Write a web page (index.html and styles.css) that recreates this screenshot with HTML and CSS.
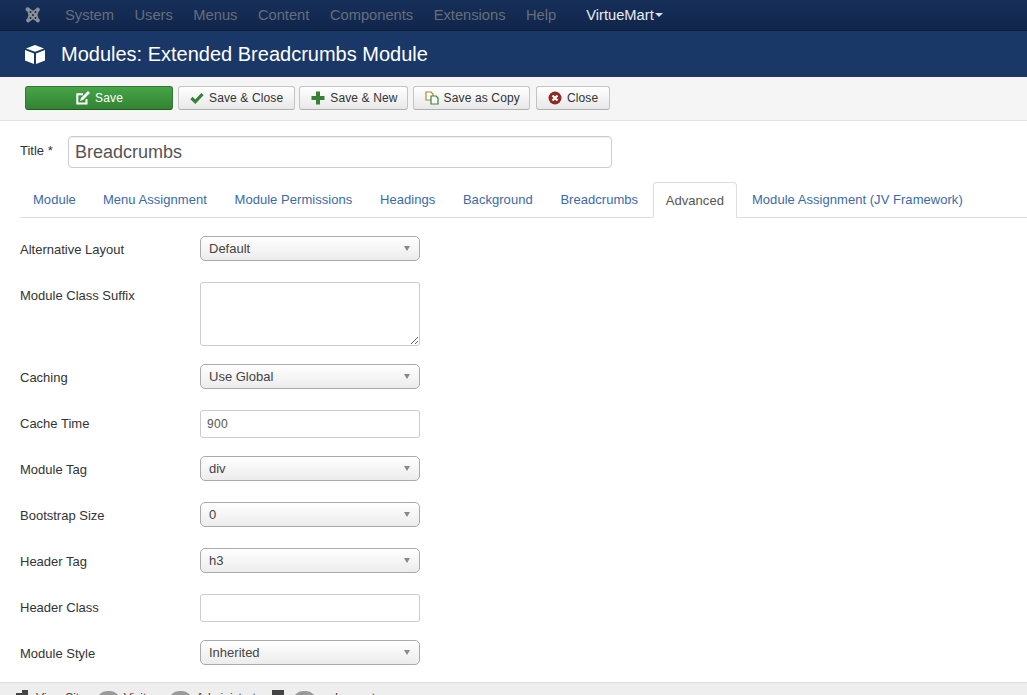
FILE: index.html
```html
<!DOCTYPE html>
<html lang="en">
<head>
<meta charset="utf-8">
<title>Modules: Extended Breadcrumbs Module</title>
<link rel="stylesheet" href="styles.css">
</head>
<body>
<nav class="navbar">
  <svg class="logo" viewBox="0 0 16 18" width="16" height="18"><path fill="#8a8f98" d="M3 1.200a2 2 0 0 1 2 1.600l3 2 3-2a2 2 0 1 1 2.600 2.600L12.500 9l1.100 3.600a2 2 0 1 1-2.600 2.600l-3-2-3 2a2 2 0 1 1-2.600-2.600L3.500 9 2.400 5.400A2 2 0 0 1 3 1.200z"/><g fill="#13294a"><circle cx="5.500" cy="6" r="1"/><circle cx="10.500" cy="6" r="1"/><circle cx="8" cy="9" r="1"/><circle cx="5.500" cy="12" r="1"/><circle cx="10.500" cy="12" r="1"/></g></svg>
  <ul class="menu">
    <li>System</li><li>Users</li><li>Menus</li><li>Content</li><li>Components</li><li>Extensions</li><li>Help</li>
  </ul>
  <div class="vm">VirtueMart<span class="caret"></span></div>
</nav>
<header class="title-bar">
  <svg class="cube" viewBox="0 0 20 19" width="20" height="19"><path fill="#fff" d="M10 0l9 3.400L10 6.800 1 3.400zM0 5l9 3.500V19l-9-3.500zM20 5v10.500L11 19V8.500z"/></svg>
  <h1>Modules: Extended Breadcrumbs Module</h1>
</header>
<div class="toolbar">
  <button class="btn btn-save"><svg viewBox="0 0 14 14" width="14" height="14"><path fill="none" stroke="#fff" stroke-width="2" d="M10.500 8v4.500h-9.200v-9.200H7"/><path fill="#fff" d="M12 0l2 2-7 7-3 1 1-3z"/></svg>Save</button>
  <button class="btn"><svg viewBox="0 0 14 14" width="14" height="14"><path fill="none" stroke="#378137" stroke-width="3.200" d="M1.500 7l3.800 3.800L12.500 3"/></svg>Save &amp; Close</button>
  <button class="btn btn-tight"><svg viewBox="0 0 14 14" width="14" height="14"><path fill="#378137" d="M5 .5h4V5h4.500v4H9v4.500H5V9H.5V5H5z"/></svg>Save &amp; New</button>
  <button class="btn btn-tight"><svg viewBox="0 0 14 14" width="14" height="14"><path fill="#fff" stroke="#a98a2e" stroke-width="1.200" d="M1 1h5l2 2v6H1z"/><path fill="#fff" stroke="#378137" stroke-width="1.200" d="M6 5h5l2 2v6H6z"/></svg>Save as Copy</button>
  <button class="btn btn-close"><svg viewBox="0 0 14 14" width="14" height="14"><circle cx="7" cy="7" r="6.500" fill="#8f2a22"/><path stroke="#fff" stroke-width="2.200" d="M4.500 4.500l5 5m0-5l-5 5"/></svg>Close</button>
</div>
<main class="content">
  <div class="title-row">
    <label class="title-label">Title *</label>
    <input class="title-input" type="text" value="Breadcrumbs">
  </div>
  <ul class="tabs">
    <li>Module</li><li>Menu Assignment</li><li>Module Permissions</li><li>Headings</li><li>Background</li><li>Breadcrumbs</li><li class="active">Advanced</li><li>Module Assignment (JV Framework)</li>
  </ul>
  <form class="form">
    <div class="row"><label>Alternative Layout</label><div class="sel">Default</div></div>
    <div class="row"><label>Module Class Suffix</label><textarea class="area"></textarea></div>
    <div class="row"><label>Caching</label><div class="sel">Use Global</div></div>
    <div class="row"><label>Cache Time</label><input class="txt" type="text" value="900"></div>
    <div class="row"><label>Module Tag</label><div class="sel">div</div></div>
    <div class="row"><label>Bootstrap Size</label><div class="sel">0</div></div>
    <div class="row"><label>Header Tag</label><div class="sel">h3</div></div>
    <div class="row"><label>Header Class</label><input class="txt" type="text"></div>
    <div class="row"><label>Module Style</label><div class="sel">Inherited</div></div>
  </form>
</main>
<footer class="status">
  <svg class="st-icon" viewBox="0 0 12 12" width="12" height="12"><path fill="#444" d="M0 3h8v9H0zM6 0h6v6H6z"/></svg><span class="st-text st-first">View Site</span>
  <span class="badge">0</span><span class="st-text">Visitors</span>
  <span class="badge">1</span><span class="st-text">Administrator</span>
  <svg class="st-icon st-mail" viewBox="0 0 12 12" width="12" height="12"><rect width="12" height="10" fill="#444"/></svg>
  <span class="badge">0</span><span class="st-text">— Log out</span>
</footer>
</body>
</html>
```
FILE: styles.css
```css
* { box-sizing: border-box; }
html, body { margin: 0; height: 695px; overflow: hidden; }
body { font-family: "Liberation Sans", Arial, sans-serif; font-size: 13px; color: #333; background: #fff; }

.navbar { display: flex; align-items: center; height: 31px; padding: 0 0 1px 25px; background: linear-gradient(#17305a, #10254a); border-bottom: 1px solid #0c1c38; }
.logo { display: block; margin: 0 24px 0 0; }
.menu { display: flex; gap: 20.5px; margin: 0; padding: 0; list-style: none; font-size: 14.7px; color: #666e7b; }
.vm { display: flex; align-items: center; margin-left: 30px; font-size: 14.7px; color: #e8ecf2; }
.caret { width: 0; height: 0; margin-left: 1px; border: 4px solid transparent; border-top-color: #d8dde5; border-bottom: 0; }

.title-bar { display: flex; align-items: center; height: 46px; padding-left: 25px; background: #1a3867; }
.cube { display: block; margin-right: 16px; }
.title-bar h1 { margin: 0; font-size: 20px; font-weight: 400; color: #fff; }

.toolbar { display: flex; align-items: flex-start; height: 44px; padding: 9px 0 0 25px; background: #f5f5f5; border-bottom: 1px solid #e3e3e3; }
.btn { display: flex; align-items: center; justify-content: center; gap: 5px; height: 24px; margin: 0 4px 0 0; padding: 0 11px; font: 12px/1 "Liberation Sans", Arial, sans-serif; letter-spacing: .13px; color: #333; background: linear-gradient(#fff, #e8e8e8); border: 1px solid #c4c4c4; border-bottom-color: #b0b0b0; border-radius: 3px; }
.btn svg { display: block; flex: none; }
.btn-save { width: 148px; margin-right: 5px; padding: 0 0 0 1px; color: #fff; background: linear-gradient(#46a546, #338433); border-color: #2f7a2f; border-bottom-color: #1f5a1f; }
.btn-tight { margin-right: 5px; padding: 0 9px 0 11px; }
.btn-close { margin-left: 1px; }

.content { padding: 15px 0 0 20px; height: 561px; }
.title-row { display: flex; align-items: center; gap: 14px; }
.title-label { font-size: 13px; color: #333; width: 34px; margin-top: -4px; }
.title-input { width: 544px; height: 32px; padding: 0 6px; font: 18px "Liberation Sans", Arial, sans-serif; color: #555; border: 1px solid #ccc; border-radius: 4px; box-shadow: inset 0 1px 1px rgba(0,0,0,.07); outline: 0; }

.tabs { display: flex; height: 36px; margin: 14px 0 0; padding: 0; list-style: none; font-size: 13px; letter-spacing: .04px; color: #3b6aa8; border-bottom: 1px solid #ddd; }
.tabs li { height: 36px; padding: 10px 14.7px 0 13px; }
.tabs li:first-child { padding-right: 14px; }
.tabs .active { margin-right: 2px; padding: 10px 12px 0; color: #555; background: #fff; border: 1px solid #ddd; border-bottom-color: #fff; border-radius: 4px 4px 0 0; }

.form { padding-top: 18px; }
.row { display: flex; align-items: flex-start; margin-bottom: 18px; min-height: 28px; }
.row label { flex: none; width: 180px; padding-top: 6px; font-size: 13px; color: #333; }
.sel { position: relative; width: 220px; height: 25px; padding: 4px 8px 0; font-size: 13px; line-height: 15px; color: #444; background: linear-gradient(#fff, #ececec); border: 1px solid #aaa; border-radius: 5px; }
.sel::after { content: ""; position: absolute; right: 9px; top: 9px; border: 3.5px solid transparent; border-top: 5px solid #888; border-bottom: 0; }
.txt { display: block; width: 220px; height: 28px; padding: 0 6px; font: 12px "Liberation Sans", Arial, sans-serif; letter-spacing: .3px; color: #555; border: 1px solid #ccc; border-radius: 3px; outline: 0; }
.area { display: block; width: 220px; height: 64px; margin: 0; border: 1px solid #ccc; border-radius: 3px; outline: 0; }

.status { display: flex; align-items: flex-start; height: 40px; padding: 5px 0 0 16px; font-size: 12px; color: #444; background: #eee; border-top: 1px solid #ddd; }
.st-icon { margin: 2px 8px 0 0; flex: none; }
.st-mail { margin: 2px 5px 0 3px; }
.st-text { margin-right: 2px; line-height: 16px; padding-top: 2px; }
.st-first { margin-right: 7px; }
.badge { width: 23px; height: 20px; margin: 3px 4px 0 4px; text-align: center; color: #eee; background: #999; border-radius: 10px; line-height: 18px; }
```
